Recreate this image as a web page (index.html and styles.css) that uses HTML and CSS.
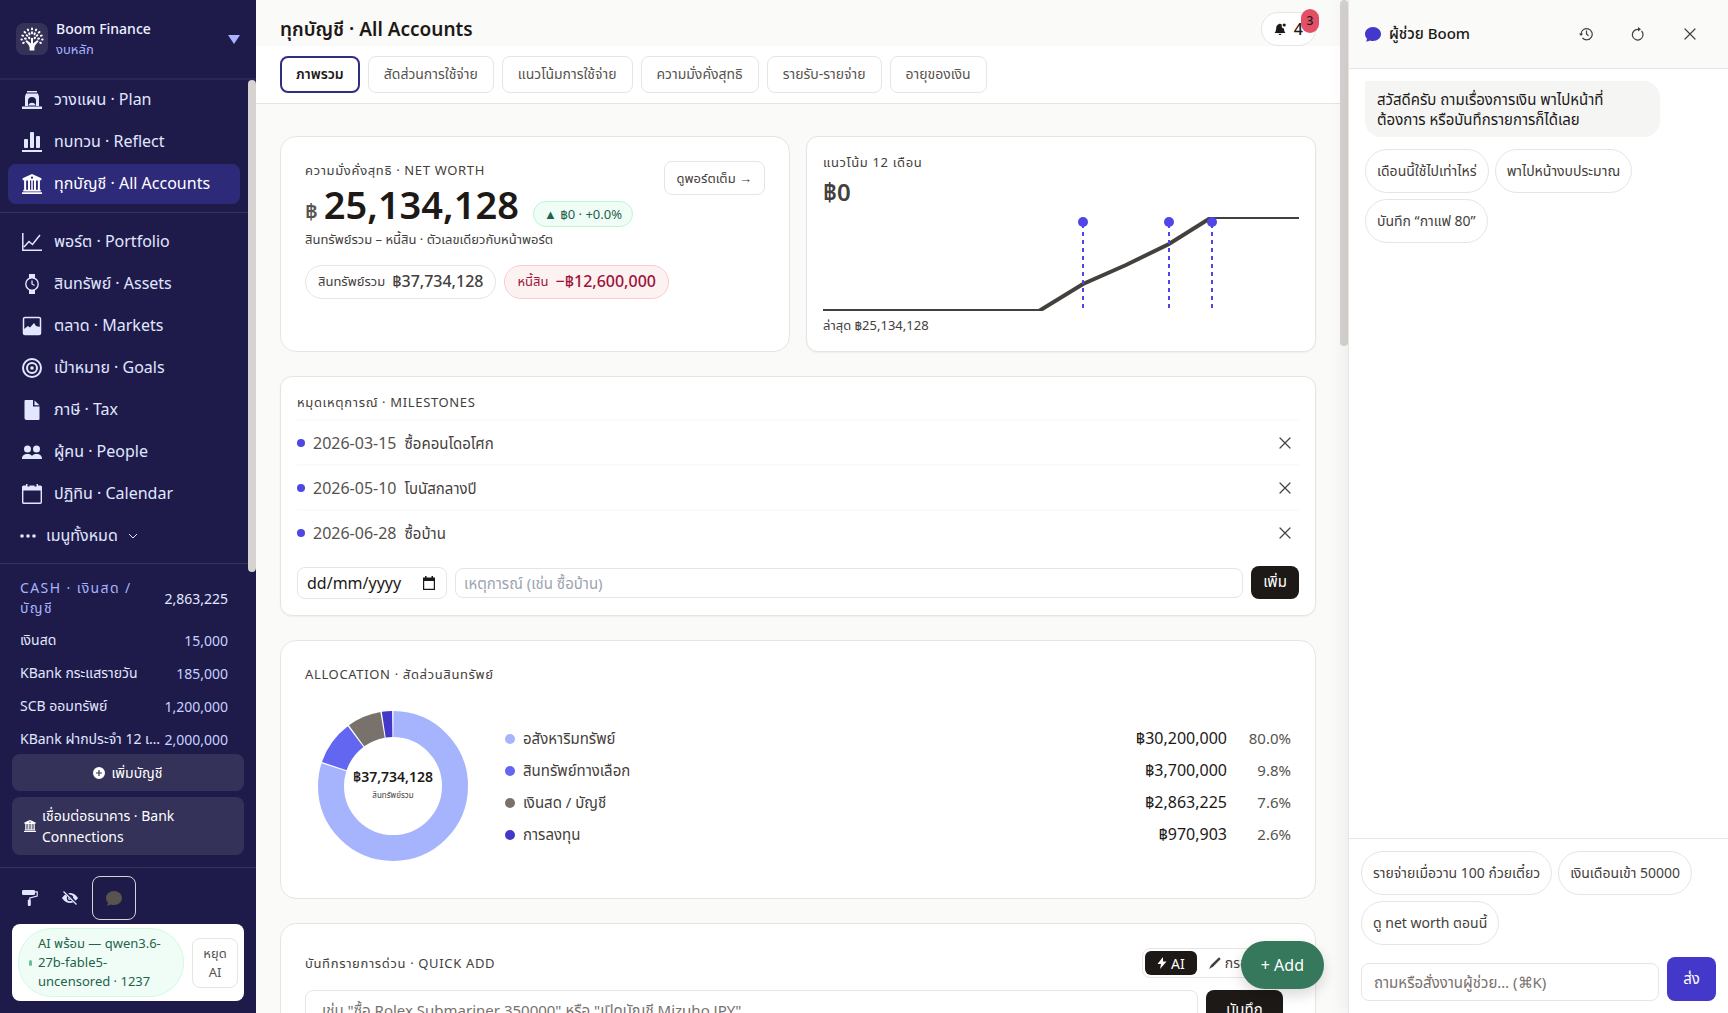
FILE: index.html
```html
<!DOCTYPE html>
<html lang="th">
<head>
    <meta charset="UTF-8">
    <meta name="viewport" content="width=device-width, initial-scale=1.0">
    <title>Boom Finance</title>
    <link rel="stylesheet" href="styles.css">
</head>
<body>
    <!-- shared icons -->
    <svg class="sprite" aria-hidden="true">
        <symbol id="i-bank" viewBox="0 0 16 16">
            <path d="M8 0 .5 3.4V5h1.2v7.6H1V14h14v-1.400h-.7V5h1.200V3.400zM8 2a.9.9 0 1 1 0 1.800A.9.9 0 0 1 8 2M3.300 5.200h1.500v7.400H3.300zm3.100 0h1v7.400h-1zm2.200 0h1v7.400h-1zm2.600 0h1.500v7.400h-1.500zM0 14.500h16V16H0z"/>
        </symbol>
        <symbol id="i-x" viewBox="0 0 12 12">
            <path d="M1 1l10 10M11 1 1 11" fill="none" stroke="currentColor" stroke-width="1.200" stroke-linecap="round"/>
        </symbol>
        <symbol id="i-chat" viewBox="0 0 16 16">
            <path d="M8 15c4.400 0 8-3.100 8-7s-3.600-7-8-7-8 3.100-8 7c0 1.800.7 3.400 2 4.600-.1 1-.4 2-.9 3 1.500-.2 2.800-.6 3.900-1.200.9.400 1.900.6 3 .6"/>
        </symbol>
    </svg>

    <div class="app">
        <aside class="sidebar">
            <header class="brand">
                <span class="brand-logo">
                    <svg viewBox="0 0 24 24" width="24" height="24" stroke="#fff" stroke-linecap="round">
                        <path d="M9.500 23.500c.4-2.700.1-4.600-1.500-6.200L5.200 14l1.600-.8L11 16.500V11h2v5.500l4.200-3.300 1.600.8-2.800 3.300c-1.600 1.600-1.900 3.500-1.500 6.200z" stroke="none"/>
                        <g fill="none" stroke-width="2">
                            <path d="M12 1.500v.8M12 5.200v1M7.800 2.600l.4.700M16.200 2.600l-.4.700M9.200 6.400l.4.800M14.800 6.400l-.4.800M4.500 5l.7.600M19.500 5l-.7.600M6.700 8.200l.6.500M17.300 8.200l-.6.500M2.300 8.600l.8.200M21.700 8.600l-.8.200M5 11.600l.8.100M19 11.600l-.8.100M1.400 12.600h.5M22.600 12.600h-.5M3.200 16l.6-.3M20.800 16l-.6-.3M9 10.500l.4.700M15 10.500l-.4.700"/>
                        </g>
                    </svg>
                </span>
                <div class="brand-text">
                    <strong>Boom Finance</strong>
                    <span>งบหลัก</span>
                </div>
                <svg class="brand-arrow" viewBox="0 0 12 9" width="12" height="9"><path d="M0 0h12L6 9z"/></svg>
            </header>

            <div class="side-scroll">
                <nav class="nav">
                    <a href="#plan">
                        <svg viewBox="0 0 20 20"><path d="M5 1h10v1.500H5zM4 3.500h12l1 3V16h-3v-5a4 4 0 0 0-8 0v5H3V6.500zM0 16.500h20V19H0zM6.500 15.500c0-2 1.600-2.800 3.500-2.800s3.500.8 3.500 2.800z"/></svg>
                        วางแผน · Plan
                    </a>
                    <a href="#reflect">
                        <svg viewBox="0 0 20 20"><rect x="2" y="7" width="4" height="9" rx="1"/><rect x="8" y="0" width="4" height="16" rx="1"/><rect x="14" y="4" width="4" height="12" rx="1"/><path d="M0 18h20v2H0z"/></svg>
                        ทบทวน · Reflect
                    </a>
                    <a href="#accounts" class="active">
                        <svg><use href="#i-bank"/></svg>
                        ทุกบัญชี · All Accounts
                    </a>
                </nav>
                <nav class="nav nav-more">
                    <a href="#portfolio">
                        <svg viewBox="0 0 20 20" fill="none" stroke="currentColor" stroke-width="1.500"><path d="M.8 1v17.200H20M2 15l5-5.500 3.500 3L18 3"/></svg>
                        พอร์ต · Portfolio
                    </a>
                    <a href="#assets">
                        <svg viewBox="0 0 20 20"><path d="M7 0h6v4H7zM7 16h6v4H7z"/><circle cx="10" cy="10" r="6.200" fill="none" stroke="currentColor" stroke-width="1.400"/><path d="M10 6.500V10l2.500 1.500" fill="none" stroke="currentColor" stroke-width="1.300"/></svg>
                        สินทรัพย์ · Assets
                    </a>
                    <a href="#markets">
                        <svg viewBox="0 0 20 20"><rect x="1.500" y="1.500" width="17" height="17" rx="1.500" fill="none" stroke="currentColor" stroke-width="1.500"/><path d="M2 13l4-3 2 1.500 4-4.500 2 3 4 1v8H2z"/></svg>
                        ตลาด · Markets
                    </a>
                    <a href="#goals">
                        <svg viewBox="0 0 20 20"><circle cx="10" cy="10" r="9" fill="none" stroke="currentColor" stroke-width="2"/><circle cx="10" cy="10" r="5" fill="none" stroke="currentColor" stroke-width="2"/><circle cx="10" cy="10" r="1.800"/></svg>
                        เป้าหมาย · Goals
                    </a>
                    <a href="#tax">
                        <svg viewBox="0 0 20 20"><path d="M3.500 0H11v6.500h6.500V19a1 1 0 0 1-1 1h-12a2 2 0 0 1-2-2V1a1 1 0 0 1 1-1M12.500.5l5 4.800h-5z"/></svg>
                        ภาษี · Tax
                    </a>
                    <a href="#people">
                        <svg viewBox="0 0 20 20"><circle cx="5.500" cy="7" r="3.500"/><circle cx="14.500" cy="7" r="3.500"/><path d="M0 17c0-3.500 2-5 5.500-5 2 0 3.500.6 4.500 2 1-1.400 2.500-2 4.500-2 3.500 0 5.500 1.500 5.500 5z"/></svg>
                        ผู้คน · People
                    </a>
                    <a href="#calendar">
                        <svg viewBox="0 0 20 20"><path d="M0 3a1.500 1.500 0 0 1 1.500-1.500H4V0h1.500v2.500h2V1.500h5v1h2V0H16v1.500h2.500A1.500 1.500 0 0 1 20 3v3.500H0z"/><rect x=".7" y="4" width="18.600" height="15.300" rx="1" fill="none" stroke="currentColor" stroke-width="1.400"/></svg>
                        ปฏิทิน · Calendar
                    </a>
                    <button type="button" class="all-menu">
                        <svg viewBox="0 0 16 16" width="16" height="16"><circle cx="2" cy="8" r="1.800"/><circle cx="8" cy="8" r="1.800"/><circle cx="14" cy="8" r="1.800"/></svg>
                        เมนูทั้งหมด
                        <svg viewBox="0 0 10 10" width="10" height="10" fill="none" stroke="currentColor"><path d="M1 3l4 4 4-4"/></svg>
                    </button>
                </nav>
                <section class="cash">
                    <div class="cash-head"><h2>CASH · เงินสด / บัญชี</h2><span>2,863,225</span></div>
                    <ul>
                        <li><span>เงินสด</span><span>15,000</span></li>
                        <li><span>KBank กระแสรายวัน</span><span>185,000</span></li>
                        <li><span>SCB ออมทรัพย์</span><span>1,200,000</span></li>
                        <li><span>KBank ฝากประจำ 12 เดือน</span><span>2,000,000</span></li>
                    </ul>
                </section>
                <div class="thumb side-thumb"></div>
            </div>

            <div class="side-actions">
                <button type="button">
                    <svg viewBox="0 0 12 12" width="12" height="12"><path fill-rule="evenodd" d="M6 0a6 6 0 1 1 0 12A6 6 0 0 1 6 0M5.400 3v2.400H3v1.200h2.400V9h1.200V6.600H9V5.400H6.600V3z"/></svg>
                    เพิ่มบัญชี
                </button>
                <button type="button" class="bank-btn">
                    <svg width="12" height="12"><use href="#i-bank"/></svg>
                    <span>เชื่อมต่อธนาคาร · Bank Connections</span>
                </button>
            </div>

            <footer class="side-foot">
                <div class="tools">
                    <button type="button" aria-label="Theme">
                        <svg viewBox="0 0 16 16" width="16" height="16"><rect x="0" y="0" width="13" height="5" rx="1.300"/><path d="M13 1.800h2.200V6l-7.400 2v2" fill="none" stroke="currentColor" stroke-width="1.200"/><rect x="5.800" y="9.500" width="3" height="6.500" rx="1"/></svg>
                    </button>
                    <button type="button" aria-label="Hide amounts">
                        <svg viewBox="0 0 16 16" width="16" height="16"><path d="M0 8s3-5 8-5 8 5 8 5-3 5-8 5-8-5-8-5"/><circle cx="8" cy="8" r="3.200" fill="#1e1b4b"/><circle cx="8" cy="8" r="2"/><path d="M1.800.8l13.400 13.400" stroke="#1e1b4b" stroke-width="3"/><path d="M1.500 1.500l13 13" stroke="currentColor" stroke-width="1.200"/></svg>
                    </button>
                    <button type="button" class="chat-toggle" aria-label="Assistant">
                        <svg width="16" height="16"><use href="#i-chat"/></svg>
                    </button>
                </div>
                <div class="ai-card">
                    <p class="ai-state"><i></i><span>AI พร้อม — qwen3.6-27b-fable5-uncensored · 1237</span></p>
                    <button type="button">หยุด AI</button>
                </div>
            </footer>
        </aside>

        <main class="main">
            <header class="topbar">
                <h1>ทุกบัญชี · All Accounts</h1>
                <button type="button" class="bell">
                    <svg viewBox="0 0 12 12" width="12" height="12"><path d="M6 12a1.500 1.500 0 0 0 1.500-1.300h-3A1.500 1.500 0 0 0 6 12M.5 10h11c-1-.8-1.400-2.500-1.500-4.500A2.500 2.500 0 0 1 8 1.800 4 4 0 0 0 6.500 1a.7.7 0 0 0-1.200 0C3.300 1.500 2.300 3 2.200 5 2 7.500 1.500 9.300.5 10"/><circle cx="10.200" cy="2" r="1.600"/></svg>
                    4
                    <span class="badge">3</span>
                </button>
            </header>
            <nav class="tabs">
                <button type="button" class="active">ภาพรวม</button>
                <button type="button">สัดส่วนการใช้จ่าย</button>
                <button type="button">แนวโน้มการใช้จ่าย</button>
                <button type="button">ความมั่งคั่งสุทธิ</button>
                <button type="button">รายรับ-รายจ่าย</button>
                <button type="button">อายุของเงิน</button>
            </nav>

            <div class="content">
                <div class="row">
                    <section class="card worth">
                        <div class="worth-top">
                            <h2 class="label">ความมั่งคั่งสุทธิ · NET WORTH</h2>
                            <a href="#portfolio" class="full-link">ดูพอร์ตเต็ม →</a>
                        </div>
                        <div class="worth-value">
                            <span class="baht">฿</span><strong>25,134,128</strong>
                            <span class="delta">▲ ฿0 · +0.0%</span>
                        </div>
                        <p class="note">สินทรัพย์รวม – หนี้สิน · ตัวเลขเดียวกับหน้าพอร์ต</p>
                        <div class="pills">
                            <span class="pill">สินทรัพย์รวม <b>฿37,734,128</b></span>
                            <span class="pill debt">หนี้สิน <b>−฿12,600,000</b></span>
                        </div>
                    </section>

                    <section class="card small trend">
                        <h2 class="label">แนวโน้ม 12 เดือน</h2>
                        <p class="trend-value">฿0</p>
                        <svg class="chart" viewBox="0 0 476 94" preserveAspectRatio="none">
                            <polyline points="0,94 216,94 260,67 303,48 346,27 389,0 476,0" fill="none" stroke="#44403c" stroke-width="4"/>
                            <g stroke="#4f46e5" stroke-width="2" stroke-dasharray="4 4"><path d="M260 7v84M346 7v84M389 7v84"/></g>
                            <g fill="#4f46e5"><circle cx="260" cy="5" r="5"/><circle cx="346" cy="5" r="5"/><circle cx="389" cy="5" r="5"/></g>
                        </svg>
                        <p class="last">ล่าสุด ฿25,134,128</p>
                    </section>
                </div>

                <section class="card small milestones">
                    <h2 class="label">หมุดเหตุการณ์ · MILESTONES</h2>
                    <ul>
                        <li><i></i><time>2026-03-15</time><span>ซื้อคอนโดอโศก</span><button type="button" aria-label="Remove"><svg width="12" height="12"><use href="#i-x"/></svg></button></li>
                        <li><i></i><time>2026-05-10</time><span>โบนัสกลางปี</span><button type="button" aria-label="Remove"><svg width="12" height="12"><use href="#i-x"/></svg></button></li>
                        <li><i></i><time>2026-06-28</time><span>ซื้อบ้าน</span><button type="button" aria-label="Remove"><svg width="12" height="12"><use href="#i-x"/></svg></button></li>
                    </ul>
                    <form class="mile-form">
                        <label class="date-box">
                            <input type="text" value="dd/mm/yyyy" aria-label="วันที่">
                            <svg viewBox="0 0 12 14" width="12" height="14"><path d="M0 1.500h2V0h1.500v1.500h5V0H10v1.500h2V14H0zM1.200 5v7.800h9.600V5z" fill-rule="evenodd"/></svg>
                        </label>
                        <input type="text" class="mile-text" placeholder="เหตุการณ์ (เช่น ซื้อบ้าน)" aria-label="เหตุการณ์">
                        <button type="button">เพิ่ม</button>
                    </form>
                </section>

                <section class="card alloc">
                    <h2 class="label">ALLOCATION · สัดส่วนสินทรัพย์</h2>
                    <div class="alloc-body">
                        <div class="donut">
                            <svg viewBox="0 0 150 150" width="150" height="150">
                                <g fill="none" stroke-width="26" transform="rotate(-90 75 75)">
                                    <circle cx="75" cy="75" r="62" pathLength="100" stroke="#a5b4fc" stroke-dasharray="79.800 100" stroke-dashoffset="-.1"/>
                                    <circle cx="75" cy="75" r="62" pathLength="100" stroke="#6366f1" stroke-dasharray="9.500 100" stroke-dashoffset="-80.200"/>
                                    <circle cx="75" cy="75" r="62" pathLength="100" stroke="#78716c" stroke-dasharray="7.300 100" stroke-dashoffset="-90"/>
                                    <circle cx="75" cy="75" r="62" pathLength="100" stroke="#4338ca" stroke-dasharray="2.200 100" stroke-dashoffset="-97.600"/>
                                </g>
                            </svg>
                            <div class="donut-text"><b>฿37,734,128</b><small>สินทรัพย์รวม</small></div>
                        </div>
                        <table class="legend">
                            <tr><th><i class="c1"></i>อสังหาริมทรัพย์</th><td>฿30,200,000</td><td>80.0%</td></tr>
                            <tr><th><i class="c2"></i>สินทรัพย์ทางเลือก</th><td>฿3,700,000</td><td>9.8%</td></tr>
                            <tr><th><i class="c3"></i>เงินสด / บัญชี</th><td>฿2,863,225</td><td>7.6%</td></tr>
                            <tr><th><i class="c4"></i>การลงทุน</th><td>฿970,903</td><td>2.6%</td></tr>
                        </table>
                    </div>
                </section>

                <section class="card quick">
                    <div class="quick-top">
                        <h2 class="label">บันทึกรายการด่วน · QUICK ADD</h2>
                        <div class="switch">
                            <button type="button" class="active"><svg viewBox="0 0 10 12" width="10" height="12"><path d="M6 0 .5 7H4l-1 5 6.500-7.500H6z"/></svg>AI</button>
                            <button type="button"><svg viewBox="0 0 12 12" width="12" height="12"><path d="M10 .3 11.700 2 4 9.800 0 12l2-4z"/></svg>กรอกเอง</button>
                        </div>
                    </div>
                    <form class="quick-form">
                        <input type="text" placeholder='เช่น "ซื้อ Rolex Submariner 350000" หรือ "เปิดบัญชี Mizuho JPY"' aria-label="บันทึกรายการด่วน">
                        <button type="button">บันทึก</button>
                    </form>
                </section>
            </div>
            <div class="thumb main-thumb"></div>
            <button type="button" class="fab">+ Add</button>
        </main>

        <aside class="assistant">
            <header>
                <svg class="assist-logo" width="16" height="16"><use href="#i-chat"/></svg>
                <h2>ผู้ช่วย Boom</h2>
                <button type="button" aria-label="History">
                    <svg viewBox="0 0 14 14" width="14" height="14" fill="none" stroke="currentColor" stroke-width="1.200"><path d="M2 7a5.600 5.600 0 1 1 1.500 4M7.500 3.500V7l2 1.700"/><path d="M0 6.500h4.200L2 9z" fill="currentColor" stroke="none"/></svg>
                </button>
                <button type="button" aria-label="Refresh">
                    <svg viewBox="0 0 14 14" width="14" height="14" fill="none" stroke="currentColor" stroke-width="1.200"><path d="M10.500 4A5.300 5.300 0 1 1 7 2.400"/><path d="M7 0v4.600L10 2.300z" fill="currentColor" stroke="none"/></svg>
                </button>
                <button type="button" aria-label="Close"><svg width="12" height="12"><use href="#i-x"/></svg></button>
            </header>
            <div class="chat-log">
                <p class="bubble">สวัสดีครับ ถามเรื่องการเงิน พาไปหน้าที่ต้องการ หรือบันทึกรายการก็ได้เลย</p>
                <div class="chips">
                    <button type="button">เดือนนี้ใช้ไปเท่าไหร่</button>
                    <button type="button">พาไปหน้างบประมาณ</button>
                    <button type="button">บันทึก “กาแฟ 80”</button>
                </div>
            </div>
            <footer>
                <div class="chips">
                    <button type="button">รายจ่ายเมื่อวาน 100 ก๋วยเตี๋ยว</button>
                    <button type="button">เงินเดือนเข้า 50000</button>
                    <button type="button">ดู net worth ตอนนี้</button>
                </div>
                <form class="ask">
                    <input type="text" placeholder="ถามหรือสั่งงานผู้ช่วย… (⌘K)" aria-label="ข้อความ">
                    <button type="button">ส่ง</button>
                </form>
            </footer>
        </aside>
    </div>
</body>
</html>
```

FILE: styles.css
```css
* {
    box-sizing: border-box;
}
body {
    margin: 0;
    font-family: "Noto Sans", "Noto Sans Thai", sans-serif;
    font-size: 14px;
    color: #1c1917;
    background: #fafaf9;
}
h1, h2, p, ul {
    margin: 0;
    padding: 0;
    font-weight: normal;
}
ul {
    list-style: none;
}
a {
    color: inherit;
    text-decoration: none;
}
button, input {
    font: inherit;
    color: inherit;
}
button {
    background: none;
    border: 0;
    padding: 0;
    cursor: pointer;
}
svg {
    flex: none;
}
svg:not([fill]) {
    fill: currentColor;
}
.sprite {
    display: none;
}
.app {
    display: grid;
    grid-template-columns: 256px minmax(0, 1fr) 380px;
    height: 100vh;
}
.thumb {
    position: absolute;
    right: 0;
    top: 0;
    width: 8px;
    border-radius: 4px;
    background: #d6d3d1;
}

/* sidebar */
.sidebar {
    display: flex;
    flex-direction: column;
    min-height: 0;
    background: #1e1b4b;
    color: #e0e7ff;
}
.brand {
    display: flex;
    align-items: center;
    gap: 8px;
    height: 80px;
    padding: 0 16px;
    border-bottom: 2px solid #292655;
}
.brand-logo {
    display: grid;
    place-items: center;
    width: 32px;
    height: 32px;
    border-radius: 8px;
    background: #353259;
    color: #fff;
}
.brand-text {
    flex: 1;
    display: flex;
    flex-direction: column;
    line-height: 20px;
}
.brand-text strong {
    font-weight: 500;
    color: #eef2ff;
}
.brand-text span {
    font-size: 13px;
    color: #a5b4fc;
}
.brand-arrow {
    color: #a5b4fc;
}
.side-scroll {
    position: relative;
    flex: 1;
    min-height: 0;
    overflow: hidden;
}
.side-thumb {
    height: 492px;
}
.nav {
    display: flex;
    flex-direction: column;
    gap: 2px;
    padding: 0 16px 8px 8px;
    border-bottom: 1px solid #353259;
}
.nav-more {
    padding-top: 9px;
    padding-bottom: 7px;
}
.nav a {
    display: flex;
    align-items: center;
    gap: 12px;
    height: 40px;
    padding: 0 14px;
    border-radius: 8px;
    font-size: 16px;
}
.nav a svg {
    width: 20px;
    height: 20px;
}
.nav a.active {
    background: #2e2a7a;
    color: #fff;
}
.all-menu {
    display: flex;
    align-items: center;
    gap: 10px;
    height: 40px;
    padding: 0 12px;
    font-size: 16px;
}
.cash {
    padding: 14px 28px 0 20px;
    font-size: 14px;
}
.cash-head {
    display: flex;
    align-items: center;
    justify-content: space-between;
    gap: 24px;
    margin-bottom: 6px;
}
.cash-head h2 {
    font-size: 14px;
    line-height: 20px;
    letter-spacing: 0.1em;
    color: #a5b4fc;
}
.cash li {
    display: flex;
    align-items: center;
    gap: 4px;
    height: 33px;
}
.cash li span:first-child {
    flex: 1;
    overflow: hidden;
    text-overflow: ellipsis;
    white-space: nowrap;
}
.cash li span:last-child {
    color: #c7d2fe;
}
.side-actions {
    display: flex;
    flex-direction: column;
    gap: 6px;
    padding: 0 12px 12px;
}
.side-actions button {
    display: flex;
    align-items: center;
    justify-content: center;
    gap: 6px;
    min-height: 37px;
    padding: 8px 12px;
    border-radius: 8px;
    background: #353259;
    color: #fff;
    line-height: 21px;
}
.side-actions .bank-btn {
    justify-content: flex-start;
    text-align: left;
}
.side-foot {
    padding: 8px 12px 12px;
    border-top: 1px solid #353259;
}
.tools {
    display: flex;
    margin-bottom: 4px;
}
.tools button {
    display: grid;
    place-items: center;
    width: 36px;
    height: 44px;
}
.tools button + button {
    margin-left: 4px;
}
.tools .chat-toggle {
    width: 44px;
    border: 1px solid #d6d3d1;
    border-radius: 8px;
    color: #57534e;
}
.ai-card {
    display: flex;
    align-items: center;
    gap: 8px;
    padding: 4px 6px;
    border-radius: 8px;
    background: #fff;
    font-size: 13px;
    color: #57534e;
}
.ai-state {
    flex: 1;
    display: flex;
    align-items: center;
    gap: 6px;
    padding: 5px 10px;
    border: 1px solid #d1fae5;
    border-radius: 34px;
    background: #f0fdf7;
    color: #24634a;
    line-height: 19px;
}
.ai-state i {
    width: 3px;
    height: 6px;
    border-radius: 2px;
    background: #66c294;
}
.ai-state span {
    flex: 1;
}
.ai-card button {
    width: 46px;
    padding: 5px 8px;
    border: 1px solid #e7e5e4;
    border-radius: 8px;
    line-height: 19px;
}

/* main column */
.main {
    position: relative;
    min-width: 0;
    padding-right: 8px;
    overflow: hidden;
}
.main-thumb {
    height: 346px;
}
.topbar {
    display: flex;
    align-items: flex-end;
    justify-content: space-between;
    height: 46px;
    padding: 0 24px;
}
.topbar h1 {
    font-size: 19px;
    font-weight: 600;
    line-height: 34px;
}
.bell {
    position: relative;
    display: flex;
    align-items: center;
    gap: 8px;
    height: 34px;
    padding: 0 12px;
    border: 1px solid #e7e5e4;
    border-radius: 17px;
    background: #fff;
    font-size: 16px;
    font-weight: 500;
}
.badge {
    position: absolute;
    top: -4px;
    right: -4px;
    width: 18px;
    border-radius: 9px;
    background: #e15064;
    font-size: 12px;
    line-height: 24px;
}
.tabs {
    display: flex;
    gap: 8px;
    padding: 10px 24px;
    background: #fff;
    border-bottom: 1px solid #e7e5e4;
}
.tabs button {
    height: 37px;
    padding: 0 15px;
    border: 1px solid #e7e5e4;
    border-radius: 8px;
    color: #57534e;
}
.tabs .active {
    padding: 0 14px;
    border: 2px solid #312e81;
    color: #1c1917;
    font-weight: 600;
}
.content {
    display: flex;
    flex-direction: column;
    gap: 24px;
    padding: 32px 24px;
}
.row {
    display: grid;
    grid-template-columns: 1fr 1fr;
    gap: 16px;
}
.card {
    padding: 24px;
    border: 1px solid #e7e5e4;
    border-radius: 16px;
    background: #fff;
}
.card.small {
    padding: 16px;
    border-radius: 12px;
    box-shadow: 0 1px 2px rgba(0, 0, 0, 0.05);
}
.label {
    font-size: 13px;
    line-height: 18px;
    letter-spacing: 0.05em;
    color: #44403c;
}
.worth-top {
    display: flex;
    justify-content: space-between;
    height: 22px;
}
.full-link {
    height: 34px;
    padding: 0 12px;
    border: 1px solid #e7e5e4;
    border-radius: 8px;
    font-size: 13px;
    line-height: 32px;
    color: #44403c;
}
.worth-value {
    display: flex;
    align-items: baseline;
    height: 42px;
}
.worth-value strong {
    margin: 0 14px 0 6px;
    font-size: 38px;
    font-weight: 600;
    line-height: 42px;
}
.baht {
    font-size: 22px;
    font-weight: 600;
    color: #57534e;
}
.delta {
    padding: 0 10px;
    border: 1px solid #bbf7d0;
    border-radius: 13px;
    background: #f0fdf7;
    font-size: 13px;
    line-height: 24px;
    color: #24634a;
}
.note {
    margin: 4px 0 16px;
    font-size: 13px;
    line-height: 20px;
    color: #44403c;
}
.pills {
    display: flex;
    gap: 8px;
}
.pill {
    display: flex;
    align-items: center;
    gap: 7px;
    height: 34px;
    padding: 0 12px;
    border: 1px solid #e7e5e4;
    border-radius: 17px;
    font-size: 13px;
    color: #44403c;
}
.pill b {
    font-size: 16px;
    font-weight: 500;
}
.pill.debt {
    border-color: #fbcbd0;
    background: #fdf2f2;
    color: #9f1239;
}
.trend-value {
    margin: 6px 0 10px;
    font-size: 24px;
    font-weight: 600;
    line-height: 30px;
    color: #44403c;
}
.chart {
    display: block;
    width: 100%;
    height: 94px;
}
.last {
    margin-top: 4px;
    font-size: 13px;
    line-height: 20px;
    color: #44403c;
}
.milestones .label {
    margin-bottom: 8px;
}
.milestones li {
    display: flex;
    align-items: center;
    gap: 8px;
    height: 45px;
    border-top: 2px solid #fafaf9;
    font-size: 15px;
    line-height: 20px;
    color: #44403c;
}
.milestones i {
    width: 8px;
    height: 8px;
    border-radius: 50%;
    background: #4f46e5;
}
.milestones time {
    font-size: 16px;
    color: #57534e;
}
.milestones li span {
    flex: 1;
}
.milestones li button {
    display: flex;
    padding: 8px;
    color: #44403c;
}
.mile-form {
    display: flex;
    align-items: center;
    gap: 8px;
    margin-top: 12px;
    font-size: 15px;
}
.date-box {
    display: flex;
    align-items: center;
    width: 150px;
    height: 32px;
    padding: 0 11px 0 9px;
    border: 1px solid #e7e5e4;
    border-radius: 8px;
    font-size: 16px;
}
.date-box input {
    flex: 1;
    min-width: 0;
    padding: 0;
    border: 0;
    background: none;
}
.mile-text {
    flex: 1;
    min-width: 0;
    height: 30px;
    padding: 0 8px;
    border: 1px solid #e7e5e4;
    border-radius: 8px;
}
.mile-text::placeholder {
    color: #9ca3af;
}
.mile-form button {
    height: 33px;
    padding: 0 12px;
    border-radius: 8px;
    background: #1c1917;
    color: #fff;
}
.alloc-body {
    display: flex;
    align-items: center;
    gap: 37px;
    padding: 28px 0 13px 13px;
}
.donut {
    display: grid;
    place-items: center;
}
.donut svg, .donut-text {
    grid-area: 1 / 1;
}
.donut-text {
    display: flex;
    flex-direction: column;
    align-items: center;
    line-height: 18px;
}
.donut-text b {
    font-size: 14px;
    font-weight: 600;
}
.donut-text small {
    font-size: 8px;
    color: #44403c;
}
.legend {
    flex: 1;
    border-collapse: collapse;
    font-size: 16px;
    line-height: 20px;
}
.legend th, .legend td {
    height: 32px;
    padding: 0;
    font-weight: normal;
    text-align: right;
}
.legend th {
    text-align: left;
    font-size: 15px;
    color: #44403c;
}
.legend td:last-child {
    width: 64px;
    font-size: 15px;
    color: #57534e;
}
.legend i {
    display: inline-block;
    width: 10px;
    height: 10px;
    margin-right: 8px;
    border-radius: 50%;
}
.c1 { background: #a5b4fc; }
.c2 { background: #6366f1; }
.c3 { background: #78716c; }
.c4 { background: #4338ca; }
.quick-top {
    display: flex;
    align-items: center;
    justify-content: space-between;
    margin-bottom: 12px;
}
.switch {
    display: flex;
    padding: 2px;
    border: 1px solid #e7e5e4;
    border-radius: 8px;
    font-size: 14px;
    color: #44403c;
}
.switch button {
    display: flex;
    align-items: center;
    gap: 4px;
    height: 24px;
    padding: 0 12px;
    border-radius: 6px;
}
.switch .active {
    background: #1c1917;
    color: #fff;
}
.quick-form {
    display: flex;
    gap: 8px;
    padding-right: 8px;
}
.quick-form input {
    flex: 1;
    height: 40px;
    padding: 0 16px;
    border: 1px solid #e7e5e4;
    border-radius: 8px;
    font-size: 15px;
}
.quick-form input::placeholder, .ask input::placeholder {
    color: #78716c;
}
.quick-form button {
    width: 77px;
    border-radius: 8px;
    background: #1c1917;
    color: #fff;
    font-size: 15px;
}
.fab {
    position: absolute;
    right: 24px;
    bottom: 24px;
    height: 48px;
    padding: 0 20px;
    border-radius: 24px;
    background: #35785b;
    color: #fff;
    font-size: 16px;
    box-shadow: 0 6px 14px rgba(0, 0, 0, 0.15);
}

/* assistant panel */
.assistant {
    position: relative;
    display: flex;
    flex-direction: column;
    border-left: 1px solid #e7e5e4;
    background: #fff;
    box-shadow: -4px 0 16px rgba(0, 0, 0, 0.06);
}
.assistant > header {
    display: flex;
    align-items: center;
    gap: 8px;
    height: 69px;
    padding: 0 16px;
    background: #fafaf9;
    border-bottom: 1px solid #e7e5e4;
}
.assist-logo {
    color: #4338ca;
}
.assistant h2 {
    flex: 1;
    font-size: 15px;
    font-weight: 500;
}
.assistant > header button {
    display: grid;
    place-items: center;
    width: 44px;
    height: 44px;
    color: #44403c;
}
.chat-log {
    flex: 1;
    padding: 12px 16px;
}
.bubble {
    width: 85%;
    margin-bottom: 12px;
    padding: 8px 12px;
    border-radius: 3px 16px 16px 16px;
    background: #f5f5f4;
    font-size: 15px;
    line-height: 20px;
}
.chips {
    display: flex;
    flex-wrap: wrap;
    gap: 6px;
}
.chips button {
    height: 44px;
    padding: 0 11px;
    border: 1px solid #e7e5e4;
    border-radius: 22px;
    color: #44403c;
}
.assistant > footer {
    padding: 12px;
    border-top: 1px solid #e7e5e4;
}
.ask {
    display: flex;
    align-items: flex-end;
    gap: 8px;
    margin-top: 12px;
    font-size: 15px;
}
.ask input {
    flex: 1;
    min-width: 0;
    height: 38px;
    padding: 0 12px;
    border: 1px solid #e7e5e4;
    border-radius: 8px;
}
.ask button {
    width: 49px;
    height: 44px;
    border-radius: 8px;
    background: #4338ca;
    color: #fff;
}
```
